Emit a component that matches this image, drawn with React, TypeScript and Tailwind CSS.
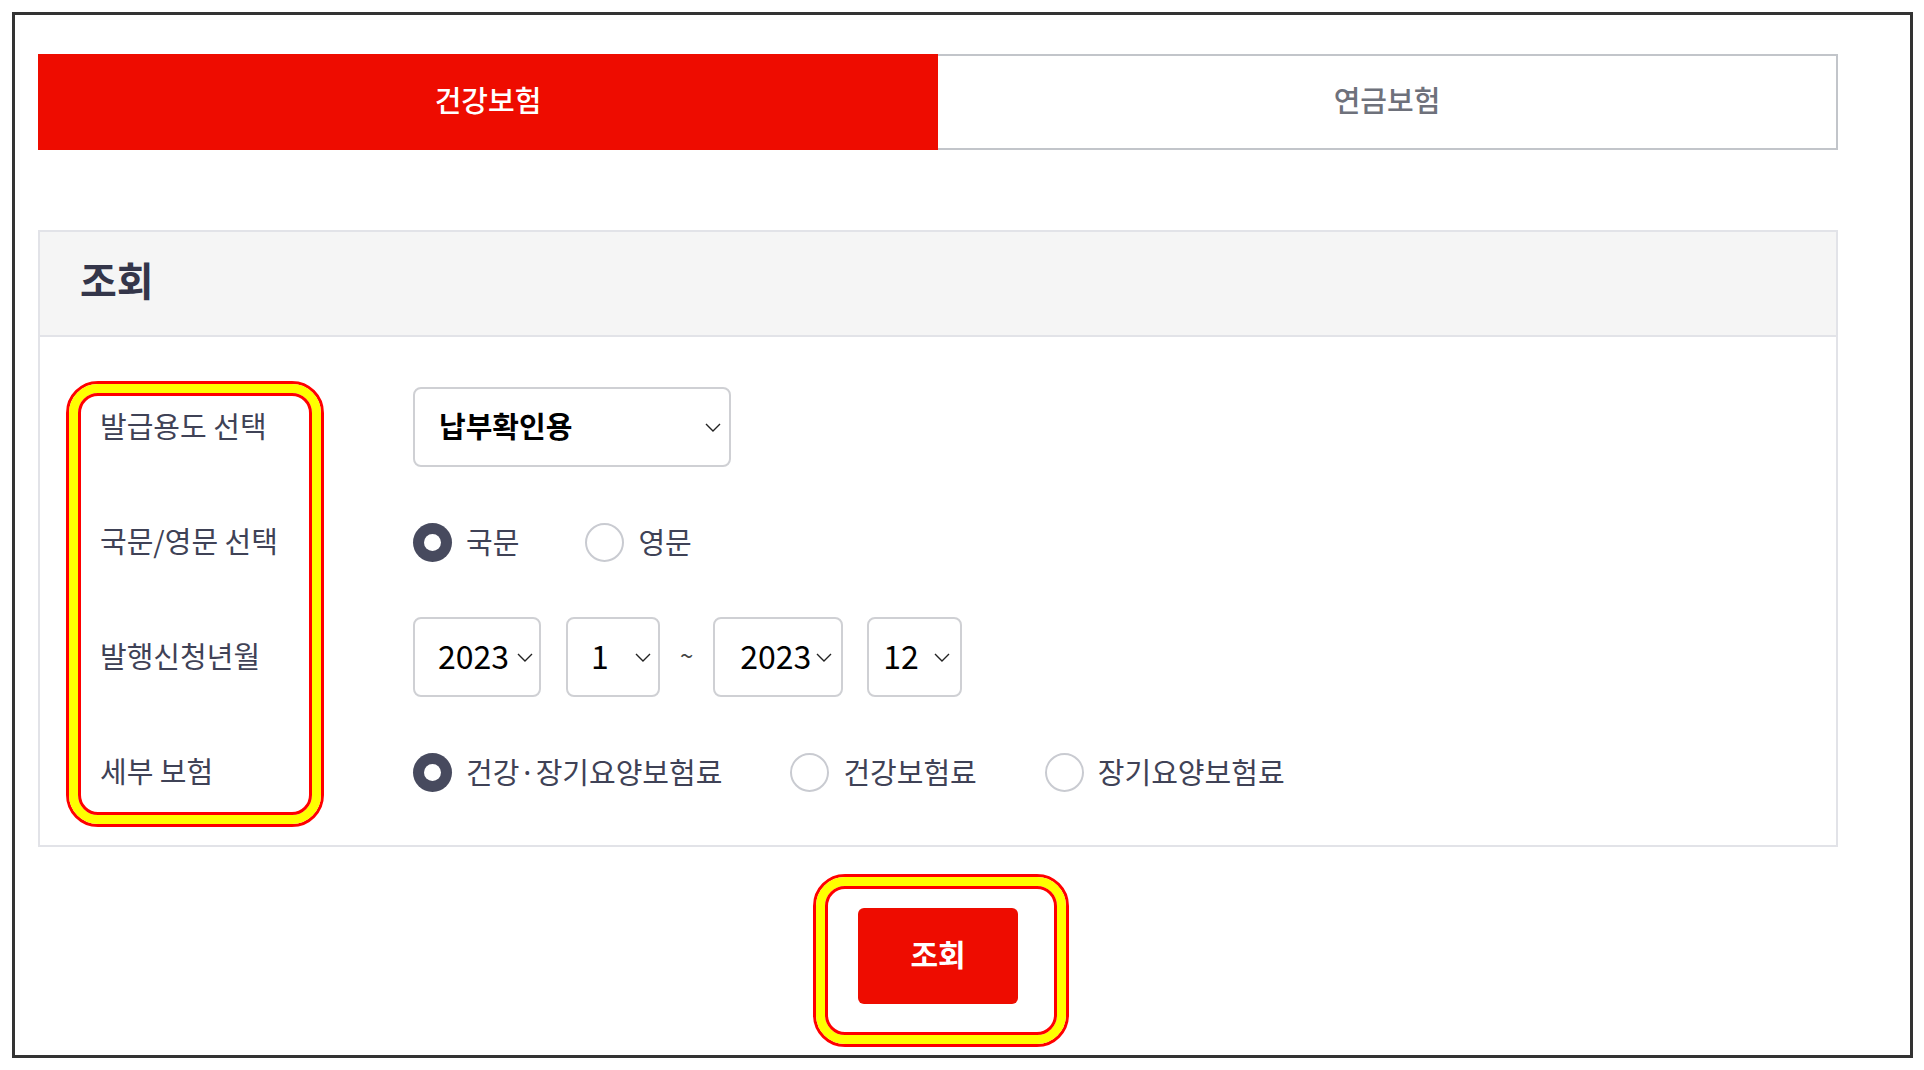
import React from "react";

const FONT = "font-['Noto_Sans_CJK_KR','Noto_Sans',sans-serif]";

function Chevron() {
  return (
    <svg width="16" height="9" viewBox="0 0 16 9" fill="none" className="shrink-0">
      <path d="M1 1l7 7 7-7" stroke="#222" strokeWidth="1.4" />
    </svg>
  );
}

function Radio({ checked, label }: { checked?: boolean; label: React.ReactNode }) {
  return (
    <div className="flex items-center gap-[14px]">
      {checked ? (
        <span className="flex h-[39px] w-[39px] items-center justify-center rounded-full bg-[#474a5e]">
          <span className="h-[17px] w-[17px] rounded-full bg-white" />
        </span>
      ) : (
        <span className="h-[39px] w-[39px] rounded-full border-2 border-[#c9cbd1] bg-white" />
      )}
      <span className="pb-[2px] text-[29px] leading-none text-[#3f4256]">{label}</span>
    </div>
  );
}

function Ring({ className }: { className: string }) {
  return (
    <div className={"pointer-events-none absolute rounded-[32px] border-[3px] border-[#ff0000] " + className}>
      <div className="h-full w-full rounded-[29px] border-[9px] border-[#ffff00]">
        <div className="h-full w-full rounded-[20px] border-[3px] border-[#ff0000]" />
      </div>
    </div>
  );
}

export default function App() {
  return (
    <div className={"min-h-[1070px] bg-white pl-[12px] pt-[12px] " + FONT}>
      <div className="relative h-[1046px] w-[1901px] border-[3px] border-[#333333] pl-[23px] pt-[39px]">
        {/* Tabs */}
        <div className="flex h-[96px] w-[1800px]">
          <div className="flex w-[900px] items-center justify-center bg-[#ee0c00] pb-[5px] text-[29px] font-medium text-white">
            건강보험
          </div>
          <div className="flex w-[900px] items-center justify-center border-y-2 border-r-2 border-[#c2c5ca] pb-[5px] text-[29px] font-medium text-[#6e717b]">
            연금보험
          </div>
        </div>

        {/* Section */}
        <div className="mt-[80px] w-[1800px] border-2 border-[#e2e3e8]">
          <div className="flex h-[105px] items-center border-b-2 border-[#e2e3e8] bg-[#f5f5f5] pb-[9px] pl-[40px]">
            <span className="text-[40px] font-bold leading-none text-[#34364a]">조회</span>
          </div>
          <div className="flex flex-col gap-[35px] pb-[33px] pl-[60px] pt-[50px]">
            {/* Row 1 */}
            <div className="flex h-[80px] items-center">
              <div className="w-[313px] pb-[2px] text-[29px] text-[#3f4256]">발급용도 선택</div>
              <div className="flex h-[80px] w-[318px] items-center rounded-[8px] border-2 border-[#cfd0d4] pl-[24px] pr-[8px]">
                <span className="flex-1 pb-[2px] text-[29px] font-bold text-black">납부확인용</span>
                <Chevron />
              </div>
            </div>
            {/* Row 2 */}
            <div className="flex h-[80px] items-center">
              <div className="w-[313px] pb-[2px] text-[29px] text-[#3f4256]">국문/영문 선택</div>
              <div className="flex items-center gap-[66px]">
                <Radio checked label="국문" />
                <Radio label="영문" />
              </div>
            </div>
            {/* Row 3 */}
            <div className="flex h-[80px] items-center">
              <div className="w-[313px] pb-[2px] text-[29px] text-[#3f4256]">발행신청년월</div>
              <div className="flex items-center">
                <div className="flex h-[80px] w-[128px] items-center rounded-[8px] border-2 border-[#cfd0d4] pl-[23px] pr-[6px]">
                  <span className="flex-1 pb-[4px] text-[32px] text-black">2023</span>
                  <Chevron />
                </div>
                <div className="ml-[25px] flex h-[80px] w-[94px] items-center rounded-[8px] border-2 border-[#cfd0d4] pl-[23px] pr-[7px]">
                  <span className="flex-1 pb-[4px] text-[32px] text-black">1</span>
                  <Chevron />
                </div>
                <span className="mx-[20px] pb-[4px] text-[24px] text-[#444]">~</span>
                <div className="flex h-[80px] w-[130px] items-center rounded-[8px] border-2 border-[#cfd0d4] pl-[25px] pr-[9px]">
                  <span className="flex-1 pb-[4px] text-[32px] text-black">2023</span>
                  <Chevron />
                </div>
                <div className="ml-[24px] flex h-[80px] w-[95px] items-center rounded-[8px] border-2 border-[#cfd0d4] pl-[14px] pr-[10px]">
                  <span className="flex-1 pb-[4px] text-[32px] text-black">12</span>
                  <Chevron />
                </div>
              </div>
            </div>
            {/* Row 4 */}
            <div className="flex h-[80px] items-center">
              <div className="w-[313px] pb-[2px] text-[29px] text-[#3f4256]">세부 보험</div>
              <div className="flex items-center gap-[68px]">
                <Radio checked label="건강·장기요양보험료" />
                <Radio label="건강보험료" />
                <Radio label="장기요양보험료" />
              </div>
            </div>
          </div>
        </div>

        {/* Button */}
        <div className="mt-[61px] flex w-[1800px] justify-center">
          <button className="h-[96px] w-[160px] rounded-[6px] bg-[#ee0c00] pb-[6px] text-[30px] font-bold text-white">
            조회
          </button>
        </div>

        <Ring className="left-[51px] top-[366px] h-[446px] w-[258px]" />
        <Ring className="left-[798px] top-[859px] h-[173px] w-[256px]" />
      </div>
    </div>
  );
}
